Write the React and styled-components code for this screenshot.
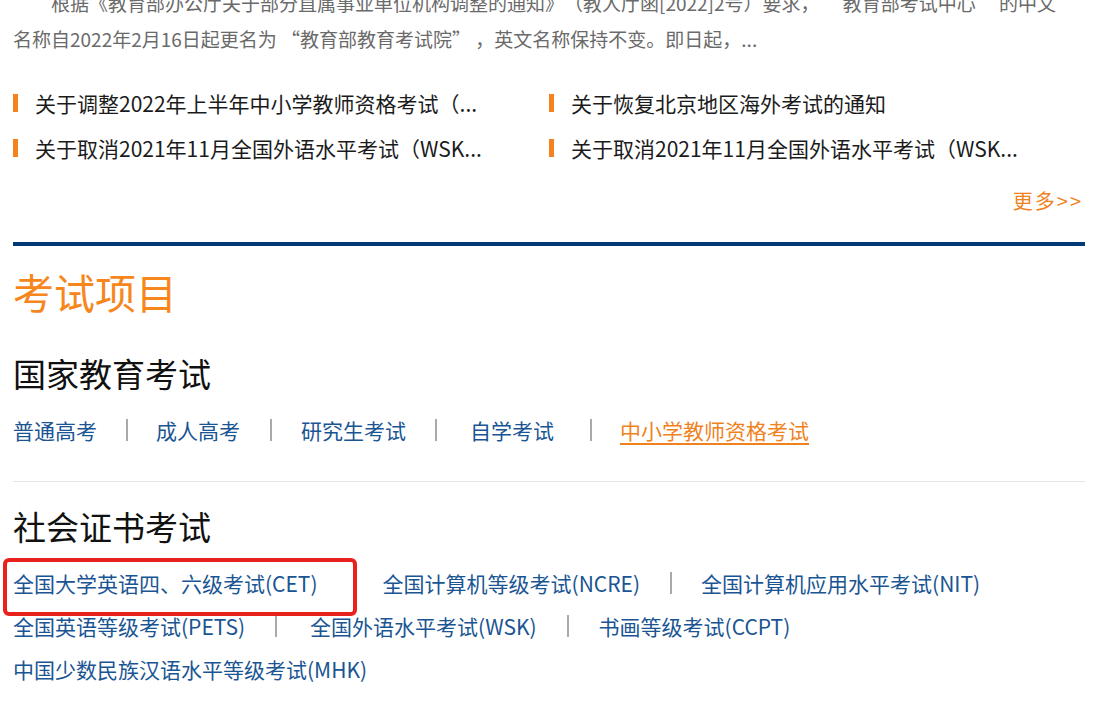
import styled, { createGlobalStyle } from 'styled-components'

const GlobalStyle = createGlobalStyle`
  html, body {
    margin: 0;
    padding: 0;
    background: #fff;
    overflow: hidden;
  }
  body {
    font-family: "Noto Sans CJK SC", "Noto Sans", sans-serif;
  }
`

const news = [
  '关于调整2022年上半年中小学教师资格考试（...',
  '关于恢复北京地区海外考试的通知',
  '关于取消2021年11月全国外语水平考试（WSK...',
  '关于取消2021年11月全国外语水平考试（WSK...',
]

// gap = [space before the bar, space after it]
const national = [
  { name: '普通高考' },
  { name: '成人高考', gap: [29, 28] },
  { name: '研究生考试', gap: [30, 29] },
  { name: '自学考试', gap: [29, 33] },
  { name: '中小学教师资格考试', gap: [36, 28], active: true },
]

const certRows = [
  [
    { name: '全国大学英语四、六级考试(CET)', marked: true },
    { name: '全国计算机等级考试(NCRE)', gap: [30, 33], hideSep: true },
    { name: '全国计算机应用水平考试(NIT)', gap: [30, 29] },
  ],
  [
    { name: '全国英语等级考试(PETS)' },
    { name: '全国外语水平考试(WSK)', gap: [30, 33] },
    { name: '书画等级考试(CCPT)', gap: [30, 30] },
  ],
  [{ name: '中国少数民族汉语水平等级考试(MHK)' }],
]

function LinkList({ items }) {
  return items.map((item, i) => (
    <Item key={item.name}>
      {i > 0 && (
        <Sep
          $hidden={item.hideSep}
          $left={item.gap ? item.gap[0] : 29}
          $right={item.gap ? item.gap[1] : 29}
        />
      )}
      <ExamLink href="#" $active={item.active}>
        {item.name}
        {item.marked && <Mark />}
      </ExamLink>
    </Item>
  ))
}

function App() {
  return (
    <Page>
      <GlobalStyle />
      <Summary>
        <Line $indent>
          根据《教育部办公厅关于部分直属事业单位机构调整的通知》（教人厅函[2022]2号）要求， “教育部考试中心” 的中文
        </Line>
        <Line>名称自2022年2月16日起更名为 “教育部教育考试院” ，英文名称保持不变。即日起，...</Line>
      </Summary>

      <NewsGrid>
        {news.map((title, i) => (
          <NewsItem key={i}>
            <Bar />
            <NewsLink href="#">{title}</NewsLink>
          </NewsItem>
        ))}
      </NewsGrid>

      <More href="#">更多&gt;&gt;</More>
      <BlueRule />

      <Title>考试项目</Title>

      <Heading>国家教育考试</Heading>
      <LinkRow>
        <LinkList items={national} />
      </LinkRow>

      <Divider />

      <Heading $tight>社会证书考试</Heading>
      <CertBlock>
        {certRows.map((row, i) => (
          <CertRow key={i}>
            <LinkList items={row} />
          </CertRow>
        ))}
      </CertBlock>
    </Page>
  )
}

export default App

const Page = styled.div`
  width: 1072px;
  margin-left: 13px;
  display: flex;
  flex-direction: column;
`

const Summary = styled.div`
  margin-top: -15px;
  font-size: 19px;
  line-height: 36px;
  color: #6a6a6a;
  text-spacing-trim: space-all;
`

const Line = styled.div`
  white-space: pre;
  overflow: hidden;
  padding-left: ${p => (p.$indent ? '38px' : '0')};
`

const NewsGrid = styled.div`
  margin-top: 23px;
  display: grid;
  grid-template-columns: 536px 536px;
`

const NewsItem = styled.div`
  display: flex;
  align-items: center;
  height: 45px;
`

const Bar = styled.span`
  width: 5px;
  height: 18px;
  background: #f5821f;
  margin-right: 17px;
  flex-shrink: 0;
`

const NewsLink = styled.a`
  font-size: 21px;
  color: #1b1b1b;
  text-decoration: none;
  white-space: nowrap;
`

const More = styled.a`
  align-self: flex-end;
  margin-top: 18px;
  margin-right: 2px;
  font-size: 20px;
  line-height: 26px;
  letter-spacing: 2px;
  color: #f0821e;
  text-decoration: none;
`

const BlueRule = styled.div`
  margin-top: 28px;
  height: 4px;
  background: #053a78;
`

const Title = styled.h1`
  margin: 20px 0 0;
  font-size: 41px;
  line-height: 50px;
  font-weight: 400;
  color: #f7861c;
`

const Heading = styled.h2`
  margin: ${p => (p.$tight ? '22px' : '35px')} 0 0;
  font-size: 33px;
  line-height: 44px;
  font-weight: 400;
  color: #111;
`

const LinkRow = styled.div`
  margin-top: 20px;
  display: flex;
  align-items: center;
  height: 30px;
`

const Item = styled.div`
  display: flex;
  align-items: center;
`

const Sep = styled.span`
  width: 2px;
  height: 22px;
  background: #a9a9a9;
  margin: 0 ${p => p.$right}px 0 ${p => p.$left}px;
  visibility: ${p => (p.$hidden ? 'hidden' : 'visible')};
`

const ExamLink = styled.a`
  position: relative;
  font-size: 21px;
  white-space: nowrap;
  color: ${p => (p.$active ? '#f0821e' : '#1a5593')};
  text-decoration: ${p => (p.$active ? 'underline' : 'none')};
  text-decoration-thickness: 2px;
  text-underline-offset: 4px;
`

const Mark = styled.span`
  position: absolute;
  left: -10px;
  right: -39px;
  top: -10px;
  bottom: -18px;
  border: 4px solid #e8211c;
  border-radius: 6px;
  pointer-events: none;
`

const Divider = styled.div`
  margin-top: 36px;
  height: 1px;
  background: #e4e4e4;
`

const CertBlock = styled.div`
  margin-top: 13px;
  display: flex;
  flex-direction: column;
`

const CertRow = styled.div`
  display: flex;
  align-items: center;
  height: 43px;
`
